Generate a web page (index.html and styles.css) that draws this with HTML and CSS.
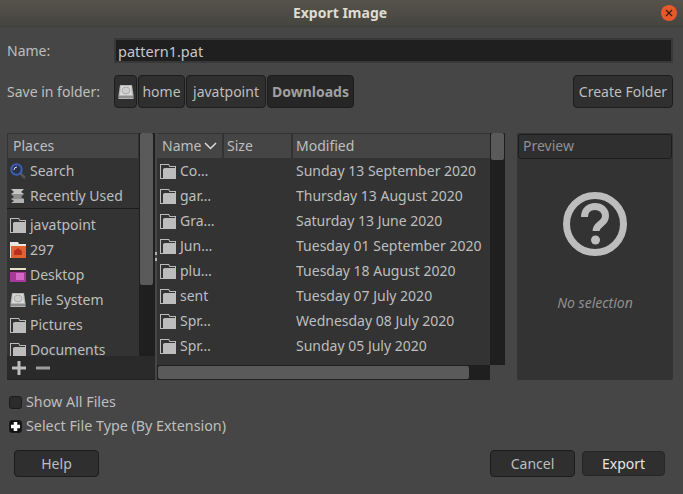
FILE: index.html
```html
<!DOCTYPE html>
<html lang="en">
<head>
    <meta charset="UTF-8">
    <title>Export Image</title>
    <link rel="stylesheet" href="styles.css">
</head>
<body>
    <svg width="0" height="0" class="defs">
        <symbol id="folder" viewBox="0 0 16 16">
            <path d="M0 1h9l1 2h6v13H0z" fill="#bdbdbd"/>
            <path d="M1 2h7.500l1 2H15v1H4.500L3 6v9H1z" fill="#333"/>
        </symbol>
        <symbol id="drive" viewBox="0 0 16 16">
            <path d="M2 1h12l1.500 10v4H.5v-4z" fill="#b4b4b4"/>
            <path d="M3 2h10l1 9H2z" fill="#dcdcdc"/>
            <ellipse cx="8" cy="6.500" rx="4" ry="3.500" fill="#cdcdcd" stroke="#a8a8a8"/>
            <rect x="1" y="12" width="14" height="2" fill="#8e8e8e"/>
        </symbol>
    </svg>

    <header class="titlebar">
        <span class="title">Export Image</span>
        <span class="close">
            <svg width="8" height="8" viewBox="0 0 8 8"><path d="M1 1l6 6M7 1L1 7" stroke="#3a1c10" stroke-width="1.200"/></svg>
        </span>
    </header>

    <main class="dialog">
        <div class="name-row">
            <label class="row-label">Name:</label>
            <div class="entry">pattern1.pat</div>
        </div>

        <div class="folder-row">
            <label class="row-label">Save in folder:</label>
            <div class="pathbar">
                <button class="btn path-icon"><svg width="16" height="16"><use href="#drive"/></svg></button>
                <button class="btn path-home">home</button>
                <button class="btn path-user">javatpoint</button>
                <button class="btn path-current">Downloads</button>
            </div>
            <button class="btn create-folder">Create Folder</button>
        </div>

        <div class="browser">
            <section class="places">
                <div class="places-top">
                    <div class="places-main">
                        <div class="column-head places-head">Places</div>
                        <ul class="places-list">
                            <li>
                                <svg class="icon" width="16" height="16" viewBox="0 0 16 16">
                                    <path d="M10 10l5 5" stroke="#555" stroke-width="2.500"/>
                                    <circle cx="6.500" cy="6.500" r="5.200" fill="#2a3144" stroke="#3b5fb5" stroke-width="2"/>
                                    <path d="M4 7a3 3 0 0 1 3-3" stroke="#dfe7f2" fill="none"/>
                                </svg>
                                Search
                            </li>
                            <li class="with-rule">
                                <svg class="icon" width="16" height="16" viewBox="0 0 16 16">
                                    <path d="M1 1h13l-3 3 3 2H1l3-2z" fill="#c4c4c4"/>
                                    <path d="M1 6h13l-3 3 3 2H1l3-2z" fill="#8f8f8f"/>
                                    <path d="M1 11h13v4H1l3-2z" fill="#b2b2b2"/>
                                </svg>
                                Recently Used
                            </li>
                            <li class="after-rule"><svg class="icon" width="16" height="16"><use href="#folder"/></svg>javatpoint</li>
                            <li>
                                <svg class="icon" width="16" height="16" viewBox="0 0 16 16">
                                    <path d="M0 0h8l1 2h7v14H0z" fill="#e9e6df"/>
                                    <rect x="1" y="4" width="15" height="12" fill="#e2622f"/>
                                    <path d="M4 13V9l4-3 4 3v4z" fill="#b8301c"/>
                                </svg>
                                297
                            </li>
                            <li>
                                <svg class="icon" width="16" height="16" viewBox="0 0 16 16">
                                    <rect x="0" y="1" width="16" height="14" fill="#a63a9c"/>
                                    <rect x="0" y="1" width="16" height="2" fill="#e6e2c8"/>
                                    <rect x="0" y="3" width="16" height="2" fill="#3a2438"/>
                                    <rect x="6" y="6" width="8" height="7" fill="#d267c6"/>
                                </svg>
                                Desktop
                            </li>
                            <li><svg class="icon" width="16" height="16"><use href="#drive"/></svg>File System</li>
                            <li><svg class="icon" width="16" height="16"><use href="#folder"/></svg>Pictures</li>
                            <li><svg class="icon" width="16" height="16"><use href="#folder"/></svg>Documents</li>
                        </ul>
                    </div>
                    <div class="scrollbar places-scroll"><div class="thumb"></div></div>
                </div>
                <div class="places-tools">
                    <svg width="16" height="16" viewBox="0 0 16 16"><path d="M8 1v14M1 8h14" stroke="#bdbdbd" stroke-width="3"/></svg>
                    <svg width="16" height="16" viewBox="0 0 16 16"><path d="M1 8h14" stroke="#9c9c9c" stroke-width="3"/></svg>
                </div>
            </section>

            <div class="grip"><span></span><span></span></div>

            <section class="files">
                <div class="files-main">
                    <div class="file-head">
                        <div class="column-head col-name">Name
                            <svg width="13" height="8" viewBox="0 0 13 8"><path d="M1 1l5.500 5.500L12 1" fill="none" stroke="#dcdcdc" stroke-width="1.500"/></svg>
                        </div>
                        <div class="column-head col-size">Size</div>
                        <div class="column-head col-modified">Modified</div>
                    </div>
                    <div class="file-row"><span class="file-name"><svg class="icon" width="16" height="16"><use href="#folder"/></svg>Co…</span><span>Sunday 13 September 2020</span></div>
                    <div class="file-row"><span class="file-name"><svg class="icon" width="16" height="16"><use href="#folder"/></svg>gar…</span><span>Thursday 13 August 2020</span></div>
                    <div class="file-row"><span class="file-name"><svg class="icon" width="16" height="16"><use href="#folder"/></svg>Gra…</span><span>Saturday 13 June 2020</span></div>
                    <div class="file-row"><span class="file-name"><svg class="icon" width="16" height="16"><use href="#folder"/></svg>Jun…</span><span>Tuesday 01 September 2020</span></div>
                    <div class="file-row"><span class="file-name"><svg class="icon" width="16" height="16"><use href="#folder"/></svg>plu…</span><span>Tuesday 18 August 2020</span></div>
                    <div class="file-row"><span class="file-name"><svg class="icon" width="16" height="16"><use href="#folder"/></svg>sent</span><span>Tuesday 07 July 2020</span></div>
                    <div class="file-row"><span class="file-name"><svg class="icon" width="16" height="16"><use href="#folder"/></svg>Spr…</span><span>Wednesday 08 July 2020</span></div>
                    <div class="file-row"><span class="file-name"><svg class="icon" width="16" height="16"><use href="#folder"/></svg>Spr…</span><span>Sunday 05 July 2020</span></div>
                </div>
                <div class="scrollbar files-vscroll"><div class="thumb"></div></div>
                <div class="files-hscroll"><div class="thumb"></div></div>
            </section>

            <section class="preview">
                <div class="preview-head">Preview</div>
                <div class="preview-body">
                    <svg width="64" height="64" viewBox="0 0 64 64">
                        <circle cx="32" cy="32" r="28.500" fill="none" stroke="#bdbdbd" stroke-width="7"/>
                        <path d="M21.500 25c0-7 5-10.500 10.500-10.500S42.500 18 42.500 24c0 8-9.500 8-9.500 15" fill="none" stroke="#bdbdbd" stroke-width="7"/>
                        <circle cx="32.500" cy="48" r="4.500" fill="#bdbdbd"/>
                    </svg>
                    <p class="no-selection">No selection</p>
                </div>
            </section>
        </div>

        <div class="checks">
            <div class="check-row"><span class="checkbox"></span>Show All Files</div>
            <div class="check-row"><span class="checkbox expander"><svg width="9" height="9" viewBox="0 0 9 9"><path d="M4.500 0v9M0 4.500h9" stroke="#fff" stroke-width="3.500"/></svg></span>Select File Type (By Extension)</div>
        </div>

        <footer class="actions">
            <button class="btn action-btn">Help</button>
            <button class="btn action-btn cancel">Cancel</button>
            <button class="btn action-btn export">Export</button>
        </footer>
    </main>
</body>
</html>
```

FILE: styles.css
```css
* {
    box-sizing: border-box;
}

html, body {
    margin: 0;
    padding: 0;
    height: 494px;
    overflow: hidden;
}

body {
    width: 683px;
    background-color: #464646;
    color: #bebebe;
    font-family: "Noto Sans", "Open Sans", sans-serif;
    font-size: 14px;
    line-height: 20px;
}

.defs {
    display: block;
    height: 0;
}

.icon {
    flex: none;
}

/* title bar */
.titlebar {
    height: 27px;
    display: flex;
    align-items: center;
    justify-content: center;
    padding-right: 3px;
    background-image: linear-gradient(#56534b, #45443f);
    border-bottom: 1px solid #3e3e3b;
    position: relative;
}

.title {
    color: #dfdbd2;
    font-weight: bold;
    font-size: 14px;
}

.close {
    position: absolute;
    top: 5px;
    right: 6px;
    width: 16px;
    height: 16px;
    border-radius: 50%;
    background-color: #e9582b;
    display: flex;
    align-items: center;
    justify-content: center;
}

/* rows */
.dialog {
    padding: 11px 10px 0 7px;
}

.name-row {
    display: flex;
    align-items: center;
    height: 25px;
}

.row-label {
    width: 107px;
    flex: none;
}

.entry {
    flex: 1;
    height: 25px;
    padding: 1px 2px;
    line-height: 21px;
    font-size: 14.500px;
    background-color: #1f1f1f;
    border: 2px solid #383838;
    color: #c8c8c8;
}

.folder-row {
    display: flex;
    align-items: center;
    height: 33px;
    margin-top: 12px;
}

.pathbar {
    display: flex;
    gap: 1px;
    flex: 1;
}

.btn {
    font: inherit;
    color: #bebebe;
    background-color: #2f2f2f;
    border: 1px solid #1c1c1c;
    border-radius: 4px;
    padding: 0;
}

.pathbar .btn {
    height: 33px;
}

.path-icon {
    width: 23px;
    display: flex;
    align-items: center;
    justify-content: center;
}

.path-home {
    width: 47px;
}

.path-user {
    width: 80px;
}

.path-current {
    width: 87px;
    font-weight: bold;
    background-color: #262626;
    color: #a0a0a0;
}

.create-folder {
    width: 100px;
    height: 33px;
}

/* browser panes */
.browser {
    display: flex;
    height: 247px;
    margin-top: 25px;
}

.places {
    width: 148px;
    flex: none;
    display: flex;
    flex-direction: column;
    background-color: #333;
}

.places-top {
    flex: 1;
    display: flex;
    min-height: 0;
}

.places-main {
    flex: 1;
    min-width: 0;
    display: flex;
    flex-direction: column;
}

.column-head {
    height: 24px;
    padding-left: 3px;
    line-height: 24px;
    background-color: #454545;
    color: #bebebe;
}

.places-head {
    margin: 1px 1px 0 1px;
    padding-left: 5px;
}

.places-list {
    list-style: none;
    margin: 0;
    padding: 0;
    flex: 1;
    overflow: hidden;
}

.places-list li {
    display: flex;
    align-items: center;
    gap: 4px;
    height: 25px;
    padding-left: 3px;
}

.places-list li.with-rule {
    height: 26px;
    border-bottom: 1px solid #1c1c1c;
}

.places-list li.after-rule {
    margin-top: 3px;
}

.scrollbar {
    width: 15px;
    flex: none;
    padding: 0 1px;
    background-color: #1f1f1f;
}

.thumb {
    background-color: #5a5a5a;
    border-radius: 2px;
}

.places-scroll {
    width: 16px;
}

.places-scroll .thumb {
    height: 152px;
    margin-right: 1px;
}

.places-tools {
    height: 24px;
    flex: none;
    display: flex;
    align-items: center;
    gap: 8px;
    padding-left: 4px;
    background-color: #2a2a2a;
    border-bottom: 1px solid #222;
}

.grip {
    width: 2px;
    flex: none;
    display: flex;
    flex-direction: column;
    justify-content: center;
    gap: 3px;
}

.grip span {
    height: 3px;
    background-color: #b0b0b0;
}

.files {
    width: 348px;
    flex: none;
    display: grid;
    grid-template-columns: 333px 15px;
    grid-template-rows: 232px 15px;
    background-color: #464646;
}

.files-main {
    background-color: #333;
    overflow: hidden;
}

.file-head {
    display: grid;
    grid-template-columns: 65px 67px 197px;
    gap: 2px;
    padding-top: 1px;
    margin-bottom: 0;
}

.col-name {
    display: flex;
    align-items: center;
    gap: 3px;
    padding-left: 5px;
}

.file-row {
    display: grid;
    grid-template-columns: 139px 1fr;
    height: 25px;
    align-items: center;
}

.file-name {
    display: flex;
    align-items: center;
    gap: 4px;
    padding-left: 3px;
}

.files-vscroll .thumb {
    height: 27px;
}

.files-hscroll {
    background-color: #1f1f1f;
    grid-column: 1;
    padding: 1px;
}

.files-hscroll .thumb {
    width: 311px;
    height: 13px;
}

.preview {
    width: 156px;
    flex: none;
    margin-left: 12px;
    display: flex;
    flex-direction: column;
    background-color: #333;
    border-radius: 2px;
}

.preview-head {
    height: 25px;
    margin: 1px 1px 0 1px;
    padding-left: 4px;
    line-height: 22px;
    background-color: #2f2f2f;
    border: 1px solid #1c1c1c;
    border-radius: 3px;
    color: #8f8f8f;
}

.preview-body {
    flex: 1;
    display: flex;
    flex-direction: column;
    align-items: center;
    padding-top: 33px;
}

.no-selection {
    margin: 37px 0 0;
    font-style: italic;
    font-size: 14px;
    color: #8f8f8f;
}

/* bottom part */
.checks {
    margin-top: 10px;
    padding-left: 2px;
}

.check-row {
    display: flex;
    align-items: center;
    gap: 4px;
    height: 24px;
    font-size: 14.300px;
}

.checkbox {
    width: 13px;
    height: 13px;
    background-color: #2b2b2b;
    border: 1px solid #1c1c1c;
    border-radius: 3px;
    display: flex;
    align-items: center;
    justify-content: center;
}

.expander {
    background-color: #111;
}

.actions {
    display: flex;
    align-items: center;
    margin-top: 12px;
    padding: 0 8px 0 7px;
}

.action-btn {
    width: 85px;
    height: 27px;
}

.cancel {
    margin-left: auto;
}

.export {
    margin-left: 7px;
    width: 83px;
    height: 25px;
    color: #e6e6e6;
    border-color: #262626;
}
```
